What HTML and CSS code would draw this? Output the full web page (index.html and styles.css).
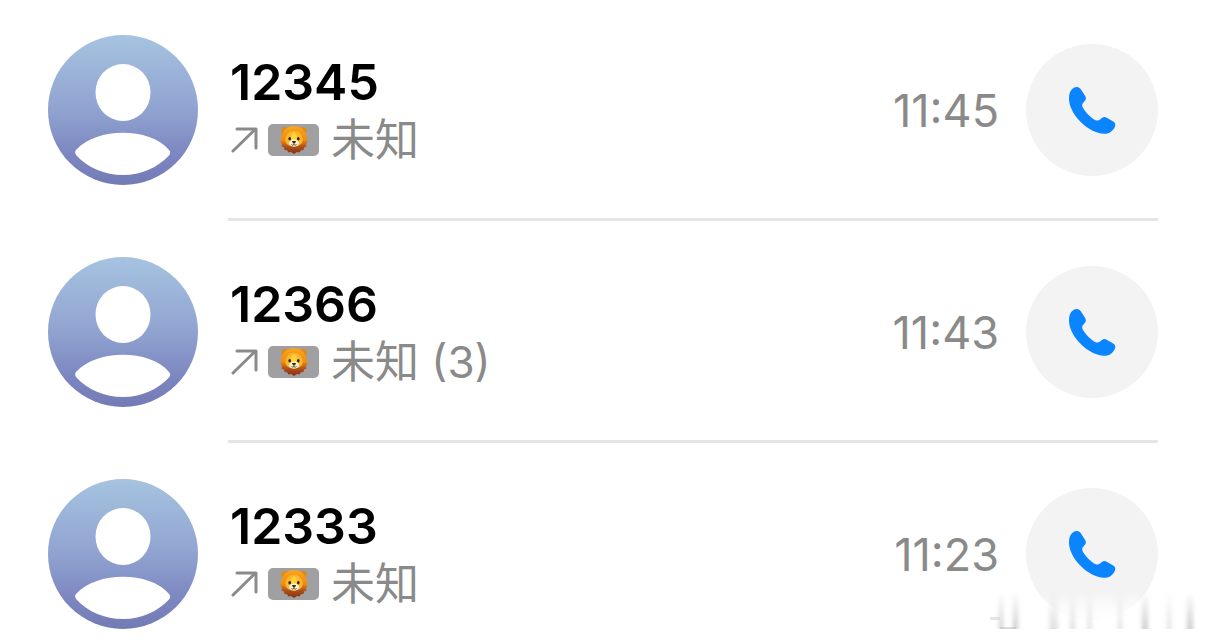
FILE: index.html
```
<!DOCTYPE html>
<html lang="zh-CN">
<head>
    <meta charset="UTF-8">
    <meta name="viewport" content="width=device-width, initial-scale=1.0">
    <title>最近通话</title>
    <link rel="stylesheet" href="styles.css">
</head>
<body>
    <!-- Shared icons -->
    <svg class="icons" aria-hidden="true">
        <defs>
            <linearGradient id="avatar-bg" x1="0" y1="0" x2="0" y2="1">
                <stop offset="0" stop-color="#a6c3e0"/>
                <stop offset="0.5" stop-color="#90a3d0"/>
                <stop offset="0.8" stop-color="#7c86c0"/>
                <stop offset="1" stop-color="#737bb5"/>
            </linearGradient>
            <linearGradient id="mane" x1="0" y1="0" x2="0" y2="1">
                <stop offset="0" stop-color="#fba51c"/>
                <stop offset="0.5" stop-color="#ee8d12"/>
                <stop offset="0.72" stop-color="#b2521c"/>
                <stop offset="1" stop-color="#84300f"/>
            </linearGradient>
            <linearGradient id="streak" x1="0" y1="0" x2="0" y2="1">
                <stop offset="0" stop-color="#999" stop-opacity="0"/>
                <stop offset="1" stop-color="#999" stop-opacity="0.5"/>
            </linearGradient>
            <linearGradient id="haze" x1="0" y1="0" x2="0" y2="1">
                <stop offset="0" stop-color="#fff" stop-opacity="0"/>
                <stop offset="0.5" stop-color="#fff" stop-opacity="0.8"/>
                <stop offset="1" stop-color="#fff"/>
            </linearGradient>
            <filter id="soft" x="-5%" y="-5%" width="110%" height="110%">
                <feGaussianBlur stdDeviation="2 0"/>
            </filter>
        </defs>
        <symbol id="person" viewBox="0 0 150 150">
            <circle cx="75" cy="75" r="75" fill="url(#avatar-bg)"/>
            <ellipse cx="75" cy="57.5" rx="27.5" ry="28.5" fill="#fff"/>
            <path fill="#fff" d="M28 115C39 103 57 97.700 75 97.700S111 103 121 115Q123.500 117.500 121 120.500C110 132.500 93 140 75 140S39 132.500 28.500 120.500Q26 117.500 28 115Z"/>
        </symbol>
        <symbol id="outgoing" viewBox="0 0 28 28">
            <path d="M3 25 25.500 3M7 3H26V22" fill="none" stroke="#8a8a8a" stroke-width="3" stroke-linecap="round" stroke-linejoin="round"/>
        </symbol>
        <symbol id="lion" viewBox="0 0 28 28">
            <circle cx="5" cy="4.500" r="3.600" fill="#e08a12"/>
            <circle cx="23" cy="4.500" r="3.600" fill="#e08a12"/>
            <path fill="url(#mane)" d="M14 0C18 0 21.500 1.500 24 4.500 26.500 8 27.500 12 27.500 16L26 18 26.500 20.500 24 21.500 23.500 24 21 24.200 19.500 26.500 17 26 14 28 11 26 8.500 26.500 7 24.200 4.500 24 4 21.500 1.500 20.500 2 18 .5 16C.5 12 1.500 8 4 4.500 6.500 1.500 10 0 14 0Z"/>
            <path fill="#fbb62c" d="M14 5C17.500 5 20 6.500 21 9 22.500 11 23 13 22.500 15.500 21.500 19 18 20.500 14 20.500S6.500 19 5.500 15.500C5 13 5.500 11 7 9 8 6.500 10.500 5 14 5Z"/>
            <path fill="#ffd53c" d="M14 6C16.500 7.500 17.500 10 16.500 14H11.500C10.500 10 11.500 7.500 14 6Z"/>
            <ellipse cx="14" cy="17" rx="5" ry="3.400" fill="#fff3d6"/>
            <ellipse cx="9.700" cy="12.700" rx="1.300" ry="1.700" fill="#30200f"/>
            <ellipse cx="18.300" cy="12.700" rx="1.300" ry="1.700" fill="#30200f"/>
            <path fill="#3b2518" d="M12 15H16Q16 16.500 14 17.500 12 16.500 12 15Z"/>
            <path fill="none" stroke="#3b2518" stroke-width=".8" d="M14 17V18.500M11.500 18.500Q13 20 14 18.500 15 20 16.500 18.500"/>
        </symbol>
        <symbol id="phone" viewBox="0 0 48 48">
            <path fill="#0a84ff" d="M3.700 3.500C5.500 1.700 7.200.9 9 1 10.700 1.100 11.900 2 13 3.600L17 9.700C18.300 11.800 18.200 13.500 16.700 15L15 16.900C14 18.200 13.900 19.700 14.800 21.400 17.300 26 22.300 31.300 27 33.900 28.700 34.800 30.300 34.900 31.700 33.800L33.900 32C35.300 30.900 37 30.800 38.700 31.800L44.800 35.300C46.800 36.400 47.500 37.800 47.200 39.500 46.800 42 44.600 45 42 46.400 39 48 34.500 48.100 30 46.800 22.500 44.600 14 38.500 8.300 31 3.800 25 1 18.500 1 12.500 1 8.500 1.800 5.400 3.700 3.500Z"/>
        </symbol>
    </svg>

    <ul class="calls">
        <li class="call">
            <svg class="avatar" aria-hidden="true"><use href="#person"/></svg>
            <div class="details">
                <div class="info">
                    <h2 class="number">12345</h2>
                    <p class="label">
                        <svg class="arrow" aria-hidden="true"><use href="#outgoing"/></svg>
                        <span class="sim"><svg class="lion" aria-hidden="true"><use href="#lion"/></svg></span>
                        <span class="place">未知</span>
                    </p>
                </div>
                <time class="time">11:45</time>
                <button class="dial" type="button" aria-label="呼叫 12345">
                    <svg class="phone" aria-hidden="true"><use href="#phone"/></svg>
                </button>
            </div>
        </li>
        <li class="call">
            <svg class="avatar" aria-hidden="true"><use href="#person"/></svg>
            <div class="details">
                <div class="info">
                    <h2 class="number">12366</h2>
                    <p class="label">
                        <svg class="arrow" aria-hidden="true"><use href="#outgoing"/></svg>
                        <span class="sim"><svg class="lion" aria-hidden="true"><use href="#lion"/></svg></span>
                        <span class="place">未知 (3)</span>
                    </p>
                </div>
                <time class="time">11:43</time>
                <button class="dial" type="button" aria-label="呼叫 12366">
                    <svg class="phone" aria-hidden="true"><use href="#phone"/></svg>
                </button>
            </div>
        </li>
        <li class="call">
            <svg class="avatar" aria-hidden="true"><use href="#person"/></svg>
            <div class="details">
                <div class="info">
                    <h2 class="number">12333</h2>
                    <p class="label">
                        <svg class="arrow" aria-hidden="true"><use href="#outgoing"/></svg>
                        <span class="sim"><svg class="lion" aria-hidden="true"><use href="#lion"/></svg></span>
                        <span class="place">未知</span>
                    </p>
                </div>
                <time class="time">11:23</time>
                <button class="dial" type="button" aria-label="呼叫 12333">
                    <svg class="phone" aria-hidden="true"><use href="#phone"/></svg>
                </button>
            </div>
        </li>
    </ul>

    <!-- Faded streaks in the corner -->
    <svg class="streaks" viewBox="0 0 206 40" aria-hidden="true">
        <rect width="206" height="40" fill="url(#haze)" filter="url(#soft)"/>
        <g fill="url(#streak)" filter="url(#soft)">
            <rect x="9" y="0" width="4" height="38"/>
            <rect x="23" y="0" width="5" height="38"/>
            <rect x="59" y="0" width="9" height="38" opacity=".6"/>
            <rect x="80" y="0" width="5" height="38" opacity=".6"/>
            <rect x="97" y="0" width="5" height="38" opacity=".5"/>
            <rect x="128" y="0" width="4" height="38" opacity=".6"/>
            <rect x="152" y="0" width="6" height="38"/>
            <rect x="177" y="0" width="4" height="38" opacity=".6"/>
            <rect x="197" y="0" width="6" height="38"/>
        </g>
        <path d="M0 26H10V29H0Z" fill="#ccc" opacity=".5"/>
        <path d="M10 37H26" stroke="#bbb" stroke-width="1"/>
    </svg>
</body>
</html>
```
FILE: styles.css
```
body {
    position: relative;
    margin: 0;
    background-color: #fff;
    color: #000;
    font-family: Inter, "Noto Sans CJK SC", sans-serif;
}
.icons {
    position: absolute;
    width: 0;
    height: 0;
}
.calls {
    display: flex;
    flex-direction: column;
    gap: 36px;
    margin: 0;
    padding: 35px 48px 12px;
    list-style: none;
}
.call {
    display: flex;
    align-items: flex-start;
    gap: 30px;
}
.avatar {
    flex: none;
    width: 150px;
    height: 150px;
}
.details {
    flex: 1;
    display: flex;
    align-items: center;
    min-height: 150px;
}
.call:not(:last-child) .details {
    padding-bottom: 33px;
    border-bottom: 3px solid #e5e5e5;
}
.info {
    flex: 1;
    padding-left: 2px;
}
.number {
    margin: 0;
    font-size: 50px;
    font-weight: 600;
    line-height: 60px;
}
.label {
    display: flex;
    align-items: center;
    margin: 0;
    color: #8a8a8a;
    font-size: 44px;
    line-height: 56px;
}
.arrow {
    width: 28px;
    height: 28px;
}
.sim {
    display: flex;
    align-items: center;
    justify-content: center;
    width: 51px;
    height: 32px;
    margin: 0 12px 0 10px;
    border-radius: 5px;
    background-color: #a0a0a3;
}
.lion {
    width: 28px;
    height: 28px;
}
.time {
    margin-right: 27px;
    color: #8a8a8a;
    font-size: 45px;
}
.dial {
    display: flex;
    align-items: center;
    justify-content: center;
    width: 132px;
    height: 132px;
    padding: 0;
    border: none;
    border-radius: 50%;
    background-color: #f3f3f3;
    cursor: pointer;
}
.phone {
    width: 48px;
    height: 48px;
}
.streaks {
    position: absolute;
    right: 10px;
    bottom: 10px;
    width: 206px;
    height: 40px;
    pointer-events: none;
}
```
